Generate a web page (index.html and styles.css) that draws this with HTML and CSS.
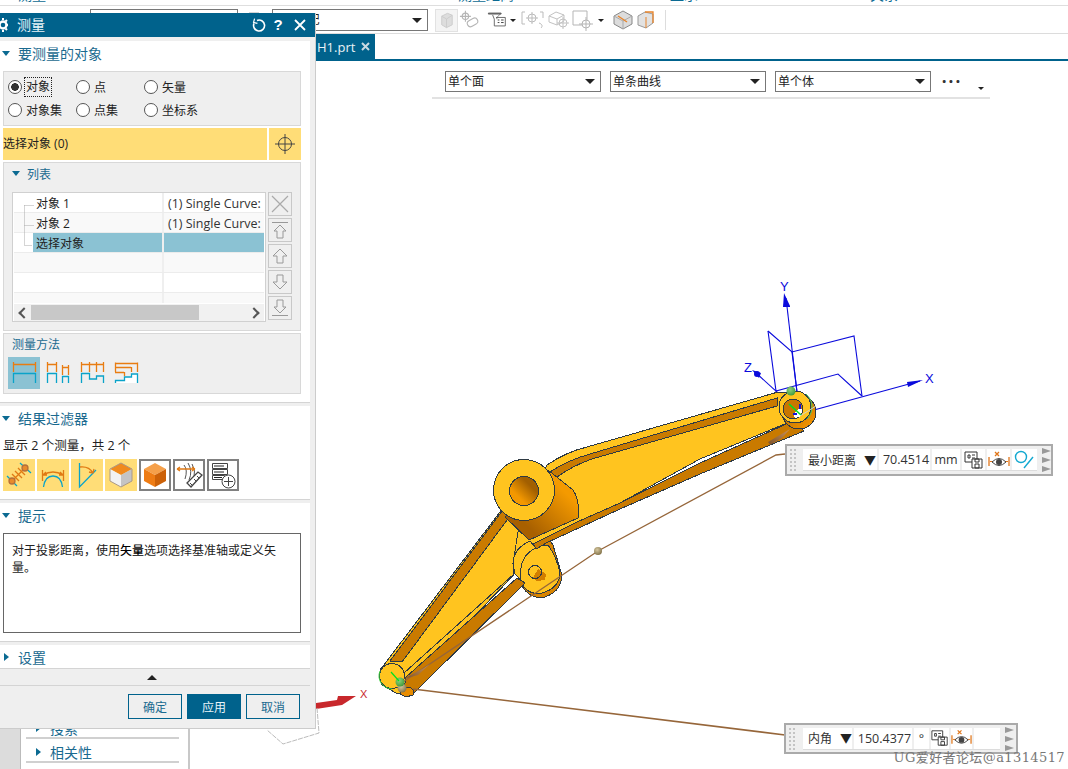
FILE: index.html
```html
<!DOCTYPE html>
<html lang="zh">
<head>
<meta charset="utf-8">
<title>测量</title>
<link rel="stylesheet" href="styles.css">
</head>
<body>
<div class="app">
  <div class="menu-strip">
    <span class="menu-word w1">测量</span><span class="menu-word w2">测量距离</span><span class="menu-word w3">显示</span><span class="menu-word w4">关系</span>
  </div>
  <div class="toolbar">
    <div class="combo combo-a"></div>
    <svg class="tb-stub" width="12" height="22" viewBox="0 0 12 22"><rect x="1" y="3" width="10" height="16" fill="#d4d4d4"/></svg>
    <div class="combo combo-b"><span class="combo-text tight">整个装配</span><i class="caret"></i></div>
    <div class="tb-icons">
      <span class="tb-box"><svg width="22" height="22" viewBox="0 0 22 22"><path d="M6 7l6-3 5 2v10l-6 3-5-3z" fill="#ddd" stroke="#ccc"/><path d="M6 7l5 3 6-4M11 10v9" fill="none" stroke="#ccc"/></svg></span>
      <svg class="ti2" width="22" height="22" viewBox="0 0 24 22" fill="none" stroke="#b5b5b5" stroke-width="1.200"><circle cx="7" cy="7" r="3.500"/><path d="M7 1v12M1 7h12"/><rect x="9" y="10" width="12" height="7" rx="3.500" transform="rotate(-30 15 14)"/></svg>
      <svg class="ti3" width="22" height="22" viewBox="0 0 26 22" fill="none" stroke="#555"><path d="M4 3h15l-5 5v2" stroke="#777"/><path d="M4 3h15v1H4z" fill="#999"/><path d="M9 5l2 5v8h13V8H13"/><path d="M15 11h2M15 14h2M19 11h3M19 14h3" stroke="#222"/></svg>
      <i class="mini-caret"></i>
      <svg class="ti4" width="24" height="22" viewBox="0 0 24 22" fill="none" stroke="#bbb"><path d="M4 3H1v12h3M19 3h3v6"/><circle cx="11" cy="9" r="4"/><path d="M11 3v12M5 9h12M18 14c3 1 4 3 2 5"/></svg>
      <svg class="ti5" width="24" height="22" viewBox="0 0 24 22" fill="none" stroke="#c2c2c2"><path d="M2 7l7-4 8 3v6l-7 4-8-3z"/><path d="M2 7l8 3 7-4M10 10v6"/><circle cx="16" cy="14" r="4"/><path d="M16 8v12M10 14h12"/></svg>
      <svg class="ti6" width="24" height="22" viewBox="0 0 24 22" fill="none" stroke="#b5b5b5"><path d="M2 2h14v14H2z"/><circle cx="15" cy="15" r="4" fill="#fff"/><path d="M15 8v14M8 15h14"/></svg>
      <i class="mini-caret"></i>
      <svg class="ti7" width="22" height="22" viewBox="0 0 22 22"><path d="M2 7l9-5 9 5v8l-9 5-9-5z" fill="#dcdcdc" stroke="#888"/><path d="M2 7l9 5 9-5M11 12v8" fill="none" stroke="#aaa"/><path d="M6 7l9 6" stroke="#e8842a" stroke-width="1.300"/></svg>
      <svg class="ti8" width="22" height="22" viewBox="0 0 22 22"><path d="M2 7l7-4 8 2v9l-7 5-8-3z" fill="#e2e2e2" stroke="#999"/><path d="M9 3h8v11" fill="none" stroke="#e8842a" stroke-width="1.300"/><path d="M10 8v11" stroke="#e8842a"/></svg>
    </div>
    <span class="tb-sep"></span>
  </div>
  <div class="tabbar"><div class="tab"><span>H1.prt</span><svg class="tab-x" width="9" height="9" viewBox="0 0 9 9" stroke="#c9d9e2" stroke-width="2"><path d="M1 1l7 7M8 1L1 8"/></svg></div></div>
  <div class="workspace">
    <aside class="nav-panel">
      <div class="nav-inner">
        <div class="nav-item clipped"><i class="tri-r"></i><span>搜索</span></div>
        <div class="nav-item"><i class="tri-r"></i><span>相关性</span></div>
      </div>
    </aside>
    <main class="graphics">
      <div class="select-bar">
        <div class="combo combo-sel"><span class="combo-text">单个面</span><i class="caret"></i></div>
        <div class="combo combo-sel"><span class="combo-text">单条曲线</span><i class="caret"></i></div>
        <div class="combo combo-sel"><span class="combo-text">单个体</span><i class="caret"></i></div>
        <span class="more">···</span>
        <i class="mini-caret end"></i>
      </div>
    </main>
  </div>

  <svg class="model" width="1068" height="769" viewBox="0 0 1068 769">
    <defs>
      <linearGradient id="cyl" x1="0" y1="1" x2="1" y2="0"><stop offset="0.25" stop-color="#a86000"/><stop offset="0.75" stop-color="#f49a00"/></linearGradient>
      <linearGradient id="hole" x1="0" y1="1" x2="1" y2="0"><stop offset="0.3" stop-color="#f39800"/><stop offset="0.7" stop-color="#a25f00"/></linearGradient>
      <linearGradient id="tipg" x1="0" y1="0" x2="1" y2="1"><stop offset="0.2" stop-color="#b46c00"/><stop offset="0.85" stop-color="#f09200"/></linearGradient>
      <radialGradient id="ballg" cx="0.4" cy="0.35" r="0.7"><stop offset="0" stop-color="#8fd07a"/><stop offset="1" stop-color="#3c9a3c"/></radialGradient>
      <radialGradient id="tang" cx="0.4" cy="0.35" r="0.7"><stop offset="0" stop-color="#d6c8a0"/><stop offset="1" stop-color="#7f6f45"/></radialGradient>
      <linearGradient id="spin" x1="0" y1="1" x2="1" y2="0"><stop offset="0" stop-color="#7d5128"/><stop offset="1" stop-color="#c8925c"/></linearGradient>
    </defs>

    <!-- CSYS behind part -->
    <g fill="none" stroke="#0a0adc" stroke-width="1.100">
      <path d="M786 298L797 392"/>
      <path d="M768 331L776 391L838 374L862 396"/>
      <path d="M768 331L792 352L854 336L862 396"/>
      <path d="M792 352L797 392"/>
      <path d="M803 413L920 381"/>
      <path d="M755 372L800 413"/>
    </g>
    <g fill="#0a0adc">
      <path d="M784 293L790 306L790 307L783 307z"/>
      <path d="M923 380L908 387L907 382z"/>
      <path d="M752 370L761 373L759 378z"/>
      <circle cx="757" cy="374" r="3"/>
    </g>

    <!-- Lug -->
    <g shape-rendering="crispEdges" stroke="#2e3a44" stroke-width="1">
      <path d="M545 533L553 545L561 572Q564 590 545 597Q530 600 522 586L516 570z" fill="#d88400"/>
      <path d="M527 546L548 545Q556 556 560 572Q560 588 542 593Q525 596 520 578Q515 560 527 546z" fill="#ffc41f"/>
      <circle cx="535" cy="572" r="6.500" fill="#ffc41f"/>
      <path d="M538 569L546 574L545 580L536 581L533 578z" fill="#d27e00" stroke="none"/>
      <circle cx="535" cy="572" r="6.500" fill="none"/>
    </g>

    <!-- Lower arm -->
    <g shape-rendering="crispEdges" stroke="#2e3a44" stroke-width="1">
      <path d="M380 670L503 508L512 514L530 541L513 563L513 576L416 676L408 694L396 693L382 685z" fill="#ffc41f"/>
      <path d="M390 661L402 662L513 512L505 507z" fill="#c97a00"/>
      <path d="M406 677L517 578L525 583L413 694L403 694z" fill="#c97a00"/>
      <path d="M404 673L514 574" fill="none"/>
      <circle cx="392" cy="676" r="12.500" fill="#ffc41f"/>
      <path d="M403 688l6-1 5 3-1 5-7 2-6-3z" fill="#e88c00"/>
    </g>
    <path d="M380 671a13 13 0 0 0 12 18" fill="none" stroke="#3ccf3c" stroke-width="1"/>

    <!-- Upper arm, then cylinder over it -->
    <g shape-rendering="crispEdges" stroke="#2e3a44" stroke-width="1">
      <path d="M547 465Q566 452 587 447L778 392L796 394L792 421L700 459L620 503L577 522L533 544Q520 550 520 560L513 563L520 520z" fill="#ffc41f"/>
      <path d="M550 472Q568 460 590 454L777 398L777 406L592 459Q572 466 557 477z" fill="#c97a00"/>
      <path d="M533 544L577 522L620 503L700 463L793 421L804 431L700 474L620 509L557 538L548 542L536 549z" fill="#c97a00"/>
      <path d="M530 541Q514 548 513 563L515 574L521 580Q518 556 536 548z" fill="#ffc41f"/>
      <path d="M548 470L573 490Q580 500 578 518L529 540L505 517z" fill="url(#cyl)"/>
      <circle cx="524" cy="490" r="30.500" fill="#ffc41f"/>
      <circle cx="524" cy="491" r="14.500" fill="url(#hole)"/>
    </g>

    <!-- Upper tip -->
    <g shape-rendering="crispEdges" stroke="#2e3a44" stroke-width="1">
      <circle cx="799" cy="412" r="17" fill="url(#tipg)"/>
      <circle cx="795" cy="407" r="16" fill="#ffc41f"/>
      <circle cx="793" cy="409" r="10" fill="#c87700"/>
      <path d="M793 414l7-6 2 2-1 6-6 2z" fill="#fff" stroke="none"/>
    </g>
    <path d="M806 394a17 17 0 0 1 1 25" fill="none" stroke="#4cc95c"/>
    <path d="M789 404L801 415" stroke="#00e020" stroke-width="1.600"/>
    <path d="M799 404h2v5h-2zM793 413h4v2h-4z" fill="#1212d8"/>
    <path d="M800 416l16 -10" stroke="#cfcfcf"/>

    <!-- Dimension lines -->
    <g fill="none" stroke="#96663a" stroke-width="1.300">
      <path d="M400 684L598 551L776 455L785 454"/>
      <path d="M413 689L785 735" stroke-width="1.600"/>
    </g>
    <path d="M403 679L424 668L430 664L418 675z" fill="url(#spin)"/>
    <path d="M768 442L790 429L782 438L770 445z" fill="url(#spin)"/>
    <circle cx="598" cy="551" r="4" fill="url(#tang)"/>
    <circle cx="402" cy="688" r="4.500" fill="url(#tang)"/>
    <circle cx="400" cy="682" r="4.500" fill="url(#ballg)"/>
    <path d="M391 672L399 681" stroke="#00e020" stroke-width="1.200"/>
    <circle cx="791" cy="391" r="4.500" fill="url(#ballg)"/>

    <!-- Red axis and gray lines -->
    <path d="M316 703L337 700L338 696L356 696L342 705L316 709z" fill="#c8282c"/>
    <path d="M317 708L319 733L283 744L267 730" fill="none" stroke="#bcbcbc" stroke-dasharray="5 1"/>
    <text class="axis-label red" x="360" y="698">X</text>
    <text class="axis-label blue" x="925" y="383">X</text>
    <text class="axis-label blue" x="780" y="291">Y</text>
    <text class="axis-label blue" x="744" y="372">Z</text>
  </svg>

  <div class="dim-tag dim-a">
    <span class="grip"></span>
    <div class="dim-cells">
      <span class="cell c-name">最小距离<i class="down">▼</i></span>
      <span class="cell c-val">70.4514</span>
      <span class="cell c-unit">mm</span>
      <span class="cell c-ico"><svg width="20" height="18" viewBox="0 0 20 18" fill="#fff" stroke="#333"><path d="M1 1h12v10H1z"/><path d="M4 4h2v3H4zM8 4h3M8 7h3" fill="none"/><path d="M8 8h10v9H8z"/><path d="M11 8h4v3h-4zM11 13h4v4h-4z" fill="none"/></svg></span>
      <span class="cell c-ico"><svg width="22" height="18" viewBox="0 0 22 18" fill="none"><path d="M7 1l4 4m0-4L7 5M1 6v9M21 6v9" stroke="#e0761a" stroke-width="1.300"/><path d="M2 10.500h3M17 10.500h3" stroke="#e0761a"/><path d="M4 11q7-7 14 0q-7 7-14 0z" stroke="#444"/><circle cx="11" cy="11" r="3" fill="#444"/></svg></span>
      <span class="cell c-ico"><svg width="22" height="20" viewBox="0 0 22 20" fill="none" stroke="#12a8d0" stroke-width="1.400"><circle cx="7" cy="7" r="5.500"/><path d="M10 18l9-11"/></svg></span>
    </div>
    <span class="arrows"><i></i><i></i><i></i></span>
  </div>

  <div class="dim-tag dim-b">
    <span class="grip"></span>
    <div class="dim-cells">
      <span class="cell c-name2">内角<i class="down">▼</i></span>
      <span class="cell c-val2">150.4377</span>
      <span class="cell c-deg">°</span>
      <span class="cell c-ico2"><svg width="20" height="18" viewBox="0 0 20 18" fill="#fff" stroke="#333"><path d="M1 1h12v10H1z"/><path d="M4 4h2v3H4zM8 4h3M8 7h3" fill="none"/><path d="M8 8h10v9H8z"/><path d="M11 8h4v3h-4zM11 13h4v4h-4z" fill="none"/></svg></span>
      <span class="cell c-ico2 wide"><svg width="22" height="18" viewBox="0 0 22 18" fill="none"><path d="M7 1l4 4m0-4L7 5M1 6v9M21 6v9" stroke="#e0761a" stroke-width="1.300"/><path d="M2 10.500h3M17 10.500h3" stroke="#e0761a"/><path d="M4 11q7-7 14 0q-7 7-14 0z" stroke="#444"/><circle cx="11" cy="11" r="3" fill="#444"/></svg></span>
      <span class="cell c-empty"></span>
    </div>
    <span class="arrows"><i></i><i></i><i></i></span>
  </div>

  <div class="watermark">UG爱好者论坛@a1314517</div>

  <section class="dialog">
    <header class="dlg-title">
      <svg class="gear" width="14" height="14" viewBox="0 0 14 14"><circle cx="3" cy="7" r="3.500" fill="none" stroke="#fff" stroke-width="2.400"/><path d="M3 0v2M3 12v2M8 7H6M7 2L5.500 3.500M7 12l-1.500-1.500" stroke="#fff" stroke-width="2"/></svg>
      <span class="dlg-name">测量</span>
      <svg class="t-reset" width="14" height="14" viewBox="0 0 14 14" fill="none" stroke="#fff" stroke-width="1.600"><path d="M5 2.400a5.500 5.500 0 1 1-3 3"/><path d="M2 1v4h4" stroke-width="1.200" transform="rotate(15 4 3)"/></svg>
      <span class="t-help">?</span>
      <svg class="t-close" width="12" height="12" viewBox="0 0 12 12" stroke="#fff" stroke-width="1.800"><path d="M1 1l10 10M11 1L1 11"/></svg>
    </header>
    <div class="dlg-scroll">
      <div class="sect first">
        <h3 class="sect-head tall"><i class="tri-d"></i>要测量的对象</h3>
        <div class="radio-box">
          <label class="radio on"><i></i><span class="focus">对象</span></label>
          <label class="radio"><i></i><span>点</span></label>
          <label class="radio"><i></i><span>矢量</span></label>
          <label class="radio"><i></i><span>对象集</span></label>
          <label class="radio"><i></i><span>点集</span></label>
          <label class="radio"><i></i><span>坐标系</span></label>
        </div>
        <div class="select-row">
          <div class="sel-label">选择对象 (0)</div>
          <div class="sel-btn"><svg width="22" height="22" viewBox="0 0 22 22" fill="none" stroke="#444"><circle cx="11" cy="11" r="6.500"/><path d="M11 1v20M1 11h20"/></svg></div>
        </div>
        <div class="group list-group">
          <div class="group-head"><i class="tri-d small"></i>列表</div>
          <div class="list-row-wrap">
            <div class="table">
              <svg class="tree" width="14" height="54" viewBox="0 0 14 54" fill="none" stroke="#aaa" stroke-dasharray="1 1"><path d="M0.500 11.500h10M0.500 11.500v40M0.500 31.500h10M0.500 51.500h8"/></svg>
              <div class="row"><span class="c1">对象 1</span><span class="c2">(1) Single Curve:</span></div>
              <div class="row alt"><span class="c1">对象 2</span><span class="c2">(1) Single Curve:</span></div>
              <div class="row sel"><span class="c1">选择对象</span><span class="c2"></span></div>
              <div class="row alt"><span class="c1"></span><span class="c2"></span></div>
              <div class="row"><span class="c1"></span><span class="c2"></span></div>
              <div class="row alt short"><span class="c1"></span><span class="c2"></span></div>
              <div class="hscroll"><span class="sb-arrow l"></span><span class="sb-thumb"></span><span class="sb-arrow r"></span></div>
            </div>
            <div class="side-btns">
              <span class="side-btn"><svg width="22" height="22" viewBox="0 0 22 22" stroke="#aaa" stroke-width="1.200"><path d="M3 3l16 16M19 3L3 19"/></svg></span>
              <span class="side-btn"><svg width="22" height="22" viewBox="0 0 22 22" fill="none" stroke="#999"><path d="M3 3.500h16M11 6l-6 6h3v7h6v-7h3z"/></svg></span>
              <span class="side-btn"><svg width="22" height="22" viewBox="0 0 22 22" fill="none" stroke="#999"><path d="M11 4l-7 7h4v7h6v-7h4z"/></svg></span>
              <span class="side-btn"><svg width="22" height="22" viewBox="0 0 22 22" fill="none" stroke="#999"><path d="M11 18l-7-7h4V4h6v7h4z"/></svg></span>
              <span class="side-btn"><svg width="22" height="22" viewBox="0 0 22 22" fill="none" stroke="#999"><path d="M3 18.500h16M11 16l-6-6h3V3h6v7h3z"/></svg></span>
            </div>
          </div>
        </div>
        <div class="group method-group">
          <div class="method-title">测量方法</div>
          <div class="method-icons">
            <span class="m-ico active"><svg width="32" height="32" viewBox="0 0 32 32" fill="none" stroke-width="1.300"><path d="M5.500 5v10M27.500 5v10M5 7.500h23" stroke="#e87c12"/><path d="M5.500 26V16.500H27.500V26" stroke="#0aa3c9"/></svg></span>
            <span class="m-ico"><svg width="32" height="32" viewBox="0 0 32 32" fill="none" stroke-width="1.300"><path d="M5.500 5v10M14.500 5v10M5 7.500h10M20.500 8v10M26.500 8v10M20 10.500h7" stroke="#e87c12"/><path d="M5.500 26V16.500H14.500V26M20.500 26V19.500H26.500V26" stroke="#0aa3c9"/></svg></span>
            <span class="m-ico"><svg width="32" height="32" viewBox="0 0 32 32" fill="none" stroke-width="1.300"><path d="M5.500 5v10M13.500 5v10M20.500 5v10M27.500 5v10M5 7.500h23" stroke="#e87c12"/><path d="M5.500 26V16.500H13.500V22H20.500V19H27.500V26" stroke="#0aa3c9"/></svg></span>
            <span class="m-ico"><svg width="32" height="32" viewBox="0 0 32 32" fill="none" stroke-width="1.300"><path d="M5 24h9v-4h7v-3h6v9H5z" fill="#fff" stroke="none"/><path d="M5.500 5.500V15M27.500 5.500V15M5 6.500h23M5 10.500h16M21.500 10v5M5 15.500h9M14.500 15v4" stroke="#e87c12"/><path d="M5.500 26v-2.500H14.500V20H21.500V17H27.500V26" stroke="#0aa3c9"/></svg></span>
          </div>
        </div>
      </div>

      <div class="sect">
        <h3 class="sect-head"><i class="tri-d"></i>结果过滤器</h3>
        <div class="count">显示 2 个测量，共 2 个</div>
        <div class="filters">
          <span class="f-btn lit"><svg width="32" height="32" viewBox="0 0 32 32" fill="none" stroke-width="1.300"><path d="M4 17L14 27M17 4L28 14" stroke="#0aa3c9"/><path d="M9 22L22 9M9 15l7 7M12 12l7 7M15 9l7 7" stroke="#e07a14"/><circle cx="9" cy="22" r="3" fill="#e88a2c" stroke="#b5703a"/><circle cx="22" cy="9" r="3" fill="#e88a2c" stroke="#b5703a"/></svg></span>
          <span class="f-btn lit"><svg width="32" height="32" viewBox="0 0 32 32" fill="none" stroke-width="1.300"><path d="M5.500 11V22M26.500 11V22M6 16Q16 10 26 16M6 16l3-3M6 16l4 0M26 16l-3-3M26 16l-4 0" stroke="#e07a14"/><path d="M6.500 28Q8 17 16 17Q24 17 25.500 28" stroke="#0aa3c9"/></svg></span>
          <span class="f-btn lit"><svg width="32" height="32" viewBox="0 0 32 32" fill="none" stroke-width="1.300"><path d="M8.500 4V28L25 11" stroke="#0aa3c9"/><path d="M9 8Q18 7 22 14M22 14l-4-1M22 14l1-4" stroke="#e07a14"/></svg></span>
          <span class="f-btn lit"><svg width="32" height="32" viewBox="0 0 32 32"><path d="M5 10l11-6 11 6-11 6z" fill="#f08a1e"/><path d="M5 10v12l11 6V16z" fill="#f2f2f2"/><path d="M27 10v12l-11 6V16z" fill="#c4c4c4"/><path d="M5 10l11-6 11 6v12l-11 6-11-6z" fill="none" stroke="#aa9988"/></svg></span>
          <span class="f-btn"><svg width="32" height="32" viewBox="0 0 32 32"><path d="M5 10l11-6 11 6-11 6z" fill="#f5a04a"/><path d="M5 10v12l11 6V16z" fill="#ee7c14"/><path d="M27 10v12l-11 6V16z" fill="#cc6108"/></svg></span>
          <span class="f-btn"><svg width="32" height="32" viewBox="0 0 32 32" fill="none"><path d="M11 6q4 5 1 14M15 4q5 8 1 17M19 5q4 6 2 13" stroke="#555"/><path d="M4 10h18M4 10l3-2M4 10l3 2M22 10l-3-2M22 10l-3 2" stroke="#e07a14" stroke-width="1.300"/><path d="M14 24l11-11 4 3-11 12z" fill="#fff" stroke="#444" stroke-width="1.300"/><path d="M17 24l2 2M21 20l2 2M24 17l2 2" stroke="#444"/></svg></span>
          <span class="f-btn"><svg width="32" height="32" viewBox="0 0 32 32" fill="none" stroke="#444"><path d="M5.500 4.500h15v5h-15zM5.500 10.500h15v5h-15zM5.500 16.500h12v4h-12z"/><path d="M7 7h10M7 13h10M7 18.500h8" stroke="#222"/><circle cx="21.500" cy="22.500" r="6.500" fill="#fff"/><path d="M21.500 18v9M17 22.500h9"/></svg></span>
        </div>
      </div>

      <div class="sect">
        <h3 class="sect-head"><i class="tri-d"></i>提示</h3>
        <div class="hint">对于投影距离，使用<span class="em">矢量</span>选项选择基准轴或定义矢量。</div>
      </div>

      <div class="sect last">
        <h3 class="sect-head short"><i class="tri-r"></i>设置</h3>
      </div>
    </div>
    <div class="dlg-more"><i class="tri-u"></i></div>
    <footer class="dlg-foot">
      <button class="btn">确定</button>
      <button class="btn primary">应用</button>
      <button class="btn">取消</button>
    </footer>
  </section>
</div>
</body>
</html>
```

FILE: styles.css
```css
* { box-sizing: border-box; }
html, body { margin: 0; padding: 0; }
body {
  width: 1068px; height: 769px; overflow: hidden; background: #fff;
  font-family: "Open Sans", "Noto Sans CJK SC", sans-serif;
  font-size: 12px; color: #222;
}
i { font-style: normal; display: block; }
.app { position: relative; width: 1068px; height: 769px; display: flex; flex-direction: column; overflow: hidden; }

/* menu strip */
.menu-strip { height: 6px; flex: none; border-bottom: 1px solid #dedede; display: flex; align-items: flex-end; overflow: hidden; color: #0b6a92; font-size: 14px; line-height: 14px; }
.menu-word { flex: none; height: 14px; margin-bottom: 3px; }
.w1 { margin-left: 18px; width: 440px; }
.w2 { width: 212px; }
.w3 { width: 200px; }
.w4 { width: 50px; }

/* toolbar */
.toolbar { height: 28px; flex: none; border-bottom: 1px solid #dcdcdc; display: flex; align-items: center; padding: 1px 0 0 90px; }
.combo { height: 22px; border: 1px solid #777; background: #fff; display: flex; align-items: center; justify-content: space-between; padding: 0 4px 0 2px; }
.combo-a { width: 148px; }
.tb-stub { margin: 0 12px 0 10px; flex: none; }
.combo-b { width: 156px; }
.combo-text { font-size: 12px; line-height: 16px; color: #222; white-space: nowrap; }
.combo-text.tight { letter-spacing: -1.200px; }
.caret { width: 0; height: 0; border: 5px solid transparent; border-top: 5px solid #222; border-bottom: 0; margin-right: 1px; }
.tb-icons { display: flex; align-items: center; margin-left: 7px; }
.tb-icons > svg { flex: none; }
.ti2 { margin-left: 1px; }
.ti3 { margin-left: 4px; }
.ti4 { margin-left: 5px; }
.ti5 { margin-left: 2px; }
.ti6 { margin-left: 0; }
.ti7 { margin-left: 8px; }
.ti8 { margin-left: 2px; }
.tb-box { width: 23px; height: 23px; border: 1px solid #e2e2e2; background: #f4f4f4; display: flex; align-items: center; justify-content: center; }
.mini-caret { width: 0; height: 0; border: 3px solid transparent; border-top: 3px solid #222; border-bottom: 0; margin-left: 3px; }
.tb-sep { width: 1px; height: 20px; background: #ddd; margin-left: 7px; }

/* tabs */
.tabbar { height: 27px; flex: none; border-bottom: 2px solid #00628c; padding-left: 316px; display: flex; }
.tab { width: 59px; background: #00628c; color: #e9f2f6; display: flex; align-items: center; padding-left: 1px; font-size: 13px; font-family: "Open Sans", sans-serif; }
.tab-x { margin-left: 6px; }

/* workspace */
.workspace { flex: 1; display: flex; min-height: 0; }
.nav-panel { width: 190px; flex: none; background: #fff; border-right: 2px solid #c8c8c8; padding-left: 20px; background-image: linear-gradient(#dcdcdc, #dcdcdc); background-size: 20px 100%; background-repeat: no-repeat; display: flex; flex-direction: column; justify-content: flex-end; }
.nav-inner { flex: 1; background: #fff; border-left: 1px solid #bbb; display: flex; flex-direction: column; justify-content: flex-end; padding: 0 9px 6px 5px; }
.nav-item { height: 24px; border-bottom: 2px solid #d0d0d0; display: flex; align-items: center; gap: 9px; padding: 3px 0 0 10px; font-size: 14px; color: #1a6a8f; }
.tri-r { width: 0; height: 0; border: 4px solid transparent; border-left: 5px solid #0b6a92; border-right: 0; flex: none; }
.graphics { flex: 1; padding: 10px 0 0 242px; min-width: 0; }
.select-bar { width: 558px; height: 28px; border-bottom: 2px solid #e2e2e2; display: flex; align-items: flex-start; padding-left: 13px; }
.combo-sel { width: 156px; height: 21px; margin-right: 9px; }
.combo-sel .combo-text { padding-top: 1px; }
.combo-sel:nth-child(3) { margin-right: 0; }
.more { width: 38px; text-align: center; font-size: 17px; line-height: 16px; font-weight: 700; margin: 3px 0 0 2px; color: #333; letter-spacing: 2px; }
.mini-caret.end { margin: 16px 0 0 7px; }

/* model */
.model { position: absolute; left: 0; top: 0; }
.axis-label { font-family: "Liberation Sans", sans-serif; font-size: 13px; }
.axis-label.red { fill: #c8282c; font-size: 11px; }
.axis-label.blue { fill: #0a0adc; }

/* dimension tags */
.dim-tag { position: absolute; background: #efefef; border: 2px solid #aaa; display: flex; align-items: center; padding: 2px 0 2px 2px; }
.dim-a { left: 785px; top: 444px; width: 268px; height: 32px; }
.dim-b { left: 784px; top: 723px; width: 234px; height: 31px; }
.grip { width: 8px; height: 100%; margin-right: 6px; flex: none; background-image: radial-gradient(circle, #c4c4c4 1.300px, transparent 1.400px); background-size: 4px 4px; }
.dim-b .grip { margin-right: 7px; }
.dim-cells { display: flex; height: 22px; background: #fff; border-bottom: 1px solid #dcdcdc; align-items: stretch; flex: none; font-size: 12.500px; color: #333; }
.cell { display: flex; align-items: center; justify-content: center; border-right: 2px solid #efefef; white-space: nowrap; flex: none; }
.c-name { width: 76px; justify-content: flex-start; padding-left: 5px; font-size: 12px; }
.down { margin-left: 8px; color: #222; font-size: 12px; }
.c-val { width: 53px; padding-left: 3px; }
.c-unit { width: 30px; }
.c-ico { width: 25px; }
.c-ico:last-child { border-right: 0; }
.c-name2 { width: 51px; justify-content: flex-start; padding-left: 5px; font-size: 12px; }
.c-val2 { width: 60px; padding-left: 3px; }
.c-deg { width: 17px; }
.c-ico2 { width: 20px; }
.c-ico2.wide { width: 23px; }
.c-empty { width: 26px; border-right: 0; }
.arrows { display: flex; flex-direction: column; gap: 3px; margin-left: 5px; }
.arrows i { width: 0; height: 0; border: 3px solid transparent; border-left: 9px solid #999; border-right: 0; }

.watermark { position: absolute; right: 3px; top: 749px; font-family: "DejaVu Serif", "Noto Sans CJK SC", serif; font-size: 13px; line-height: 17px; color: #777; white-space: nowrap; letter-spacing: 0.4px; }

/* dialog */
.dialog { position: absolute; left: 0; top: 13px; width: 316px; height: 716px; background: #efefef; border-right: 1px solid #ccc; border-bottom: 1px solid #ccc; display: flex; flex-direction: column; }
.dlg-title { height: 24px; flex: none; background: #00628c; color: #fff; display: flex; align-items: center; padding-right: 9px; }
.gear { flex: none; }
.dlg-name { margin-left: 3px; font-size: 14px; line-height: 20px; color: #e9f4f9; }
.t-reset { margin-left: auto; }
.t-help { width: 14px; margin: 0 9px 0 5px; font-size: 15px; line-height: 20px; text-align: center; font-weight: 700; font-family: "Liberation Sans", sans-serif; }
.dlg-scroll { margin-top: 4px; width: 310px; flex: none; }
.sect { background: #fff; border-bottom: 1px solid #d4d4d4; margin-bottom: 3px; }
.sect.first { height: 362px; }
.sect:nth-child(2) { height: 94px; }
.sect:nth-child(3) { height: 139px; }
.sect.last { height: 24px; margin-bottom: 0; }
.sect-head { margin: 0; height: 26px; padding-bottom: 2px; display: flex; align-items: center; font-size: 14px; font-weight: 400; color: #1a6a8f; }
.sect-head.tall { height: 30px; padding-bottom: 6px; }
.sect-head.short { height: 24px; padding: 0; }
.tri-d { width: 0; height: 0; border: 4px solid transparent; border-top: 5px solid #0b6a92; border-bottom: 0; margin: 0 8px 0 2px; flex: none; }
.tri-d.small { margin: 0 7px 0 8px; }
.sect-head .tri-r { margin: 0 9px 0 4px; }

.radio-box { margin-left: 3px; width: 298px; height: 55px; background: #efefef; border: 1px solid #d8d8d8; display: grid; grid-template-columns: 68px 68px 1fr; grid-auto-rows: 23px; align-items: center; padding: 3px 0 0 4px; }
.radio { display: flex; align-items: center; gap: 4px; font-size: 12px; color: #222; }
.radio i { width: 14px; height: 14px; flex: none; border-radius: 50%; border: 1px solid #555; background: #fff; }
.radio.on i { background: radial-gradient(circle, #333 0 3.600px, #fff 4px); }
.radio .focus { outline: 1px dotted #222; padding: 0 1px; margin-left: -1px; line-height: 18px; }

.select-row { margin: 2px 0 2px 3px; width: 298px; height: 32px; display: flex; gap: 2px; }
.sel-label { flex: 1; background: #ffdd77; line-height: 32px; font-size: 12px; color: #222; }
.sel-btn { width: 32px; background: #ffdd77; display: flex; align-items: center; justify-content: center; }

.group { margin-left: 3px; width: 298px; background: #efefef; border: 1px solid #d8d8d8; }
.list-group { height: 169px; margin-bottom: 2px; }
.group-head { height: 21px; display: flex; align-items: center; font-size: 12px; color: #1a6a8f; }
.list-row-wrap { display: flex; margin: 8px 0 0 8px; gap: 2px; }
.table { position: relative; width: 254px; height: 130px; background: #fff; border: 1px solid #d0d0d0; padding: 0 1px; }
.tree { position: absolute; left: 11px; top: 1px; }
.row { height: 20px; display: flex; border-bottom: 1px solid #ececec; background: #fff; }
.row.alt { background: #f9f9f9; }
.row.short { height: 10px; border-bottom: 0; }
.c1 { width: 150px; flex: none; padding-left: 22px; line-height: 21px; border-right: 2px solid #efefef; color: #222; white-space: nowrap; }
.c2 { flex: 1; padding-left: 4px; line-height: 21px; color: #333; white-space: nowrap; overflow: hidden; font-size: 12.500px; }
.row.sel { background: linear-gradient(to right, #fff 19px, #8bc2d3 19px); }
.hscroll { height: 17px; margin-top: 1px; display: flex; align-items: center; background: #f1f1f1; }
.sb-arrow { width: 17px; height: 15px; flex: none; position: relative; }
.sb-arrow::after { content: ""; position: absolute; top: 4px; left: 6px; width: 6px; height: 6px; border-left: 2px solid #555; border-bottom: 2px solid #555; transform: rotate(45deg); }
.sb-arrow.r { margin-left: auto; }
.sb-arrow.r::after { left: 3px; transform: rotate(225deg); }
.sb-thumb { width: 168px; height: 15px; background: #c8c8c8; }
.side-btns { display: flex; flex-direction: column; gap: 2px; }
.side-btn { width: 24px; height: 24px; border: 1px solid #c8c8c8; background: #efefef; display: flex; align-items: center; justify-content: center; }

.method-group { height: 61px; padding: 0 0 0 4px; }
.method-title { height: 22px; line-height: 22px; font-size: 12px; color: #1a6a8f; padding-left: 4px; }
.method-icons { display: flex; gap: 2px; margin-top: 1px; }
.m-ico { width: 32px; height: 32px; display: flex; align-items: center; justify-content: center; }
.m-ico.active { background: #8bc2d3; }

.count { margin: 4px 0 0 3px; height: 19px; line-height: 19px; font-size: 12.500px; color: #222; }
.filters { display: flex; gap: 2px; margin: 4px 0 0 3px; }
.f-btn { width: 32px; height: 32px; display: flex; align-items: center; justify-content: center; border: 2px solid #808080; background: #fff; }
.f-btn svg { flex: none; }
.f-btn.lit { border: 0; background: #ffdd77; }

.hint { margin: 4px 0 0 3px; width: 298px; height: 100px; border: 1px solid #666; padding: 8px; font-size: 12px; line-height: 17px; color: #222; background: #fff; }
.hint .em { color: #000; font-weight: 500; }

.dlg-more { height: 17px; width: 310px; border-bottom: 1px solid #d4d4d4; flex: none; display: flex; justify-content: center; align-items: center; padding: 0 7px 0 0; }
.tri-u { width: 0; height: 0; border: 5px solid transparent; border-bottom: 5px solid #222; border-top: 0; }
.dlg-foot { display: flex; gap: 5px; padding: 8px 0 0 128px; }
.btn { width: 54px; height: 25px; padding: 0; border: 1px solid #00628c; background: #efefef; color: #1a6a8f; font: 12px "Open Sans", "Noto Sans CJK SC", sans-serif; }
.btn.primary { background: #00628c; color: #e8f4f9; }
```
